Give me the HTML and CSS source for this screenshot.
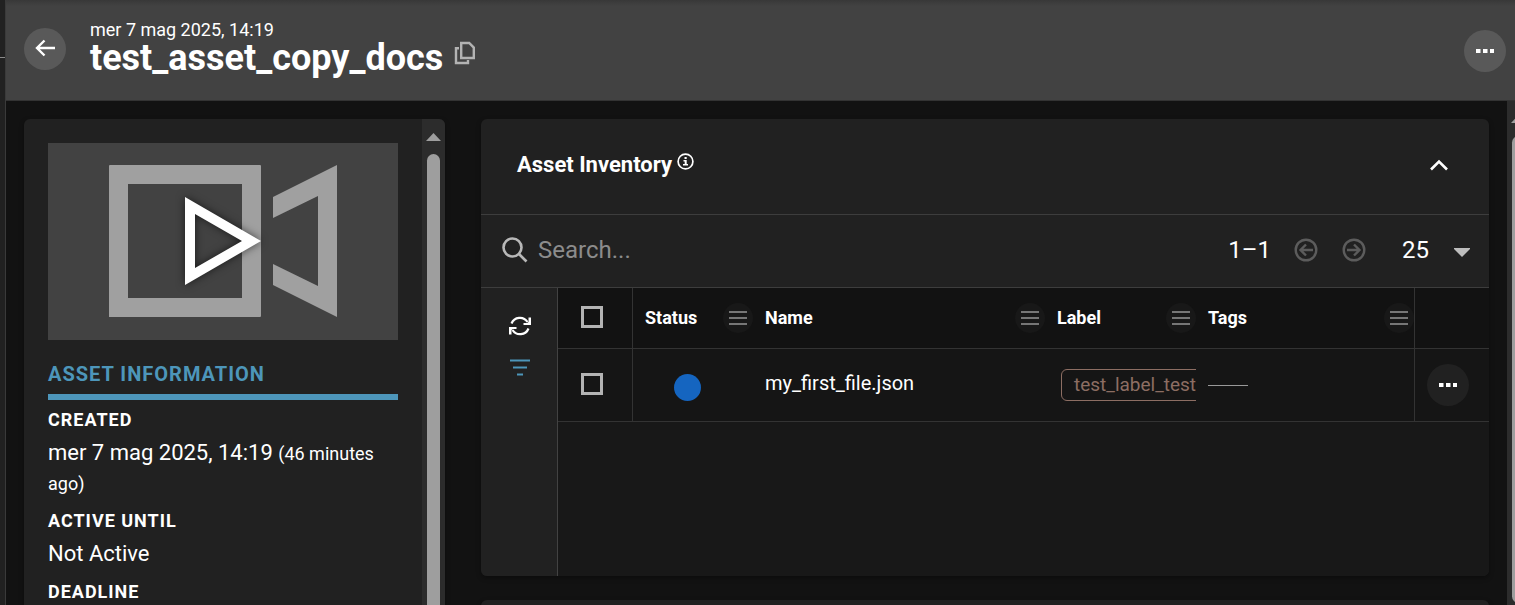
FILE: index.html
```html
<!DOCTYPE html>
<html lang="it">
<head>
<meta charset="utf-8">
<title>test_asset_copy_docs</title>
<link rel="stylesheet" href="styles.css">
</head>
<body>
<div class="app">
  <div class="rail"><div class="rail-mark"></div></div>
  <div class="page">
    <header class="topbar">
      <button class="round-btn" type="button" aria-label="Back">
        <svg width="42" height="42" viewBox="0 0 42 42"><path d="M31 20H12.500M20.500 12.500 13 20l7.500 7.500" fill="none" stroke="#fff" stroke-width="2.400"/></svg>
      </button>
      <div class="heading">
        <div class="heading-date">mer 7 mag 2025, 14:19</div>
        <h1 class="heading-title">test_asset_copy_docs</h1>
      </div>
      <button class="icon-btn copy-btn" type="button" aria-label="Copy">
        <svg width="22" height="24" viewBox="0 0 22 24"><g fill="none" stroke="#b3b3b3" stroke-width="2.400"><path d="M7.200 2h8l4.600 4.600V17H7.200z"/><path d="M5 7.200H2V22h12v-3"/></g></svg>
      </button>
      <button class="round-btn more-btn" type="button" aria-label="More actions">
        <svg width="42" height="42" viewBox="0 0 42 42" fill="#fff"><path d="M12 19h4.500v4H12zM19 19h4.500v4H19zM26 19h4v4h-4z"/></svg>
      </button>
    </header>

    <div class="content">
      <aside class="card info">
        <div class="info-body">
          <div class="preview">
            <svg class="preview-art" viewBox="0 0 350 197" role="img" aria-label="Video">
              <g fill="#a0a0a0">
                <path fill-rule="evenodd" d="M62 22h150q1 0 1 1v150q0 1-1 1H61V23q0-1 1-1zM80 41v114h114V41z"/>
                <path d="M225 54 289 22v152l-64-32v-21l45 22V53l-45 22z"/>
              </g>
              <path class="play" fill="#fff" fill-rule="evenodd" d="M137 54l76 44-76 44zM147 71v54l47-27z"/>
            </svg>
          </div>
          <h2 class="info-title">ASSET INFORMATION</h2>
          <dl class="facts">
            <dt>CREATED</dt>
            <dd>mer 7 mag 2025, 14:19 <small>(46 minutes ago)</small></dd>
            <dt>ACTIVE UNTIL</dt>
            <dd>Not Active</dd>
            <dt>DEADLINE</dt>
          </dl>
        </div>
        <div class="scroll">
          <svg class="scroll-up" width="15" height="8" viewBox="0 0 15 8"><path d="M0 8 7.500 0 15 8z" fill="#9e9e9e"/></svg>
          <div class="scroll-thumb"></div>
        </div>
      </aside>

      <main class="main">
        <section class="card inventory">
          <div class="inventory-head">
            <h2 class="inventory-title">Asset Inventory</h2>
            <svg class="info-icon" width="17" height="17" viewBox="0 0 17 17"><circle cx="8.500" cy="8.500" r="7.400" fill="none" stroke="#fff" stroke-width="1.700"/><path d="M7.500 4h2.200v2H7.500zM6.500 7h3.200v4h1.300v1.500H6V11h1.700V8.500H6.500z" fill="#fff"/></svg>
            <button class="icon-btn collapse" type="button" aria-label="Collapse">
              <svg width="20" height="12" viewBox="0 0 20 12"><path d="M2 10.500 10 2.500l8 8" fill="none" stroke="#fff" stroke-width="2.600"/></svg>
            </button>
          </div>

          <div class="toolbar">
            <label class="search">
              <svg width="26" height="26" viewBox="0 0 26 26"><g fill="none" stroke="#b8b8b8" stroke-width="2.600"><circle cx="10.500" cy="10.500" r="9"/><path d="M17 17l7.500 7.500"/></g></svg>
              <input class="search-input" type="text" placeholder="Search..." aria-label="Search">
            </label>
            <span class="range">1–1</span>
            <button class="icon-btn" type="button" aria-label="Previous page" disabled>
              <svg width="24" height="24" viewBox="0 0 24 24"><g fill="none" stroke="#5c5c5c" stroke-width="2.400"><circle cx="12" cy="12" r="10.300"/><path d="M19 12H6.500M12 6.500 6.500 12l5.500 5.500"/></g></svg>
            </button>
            <button class="icon-btn" type="button" aria-label="Next page" disabled>
              <svg width="24" height="24" viewBox="0 0 24 24"><g fill="none" stroke="#5c5c5c" stroke-width="2.400"><circle cx="12" cy="12" r="10.300"/><path d="M5 12h12.500M12 6.500l5.500 5.500-5.500 5.500"/></g></svg>
            </button>
            <label class="size">
              <select class="size-select" aria-label="Rows per page"><option>25</option></select>
              <svg class="caret" width="16" height="9" viewBox="0 0 16 9"><path d="M0 0h16v1L8 9 0 1z" fill="#bdbdbd"/></svg>
            </label>
          </div>

          <div class="grid">
            <div class="tools">
              <button class="icon-btn" type="button" aria-label="Refresh">
                <svg width="22" height="20" viewBox="0 0 22 20"><g fill="none" stroke="#fff" stroke-width="2.200"><path d="M2.500 7.500A9 9 0 0 1 18.500 6M19.500 12.500A9 9 0 0 1 3.500 14"/></g><path d="M22 1.500V9h-7.500V7h3.500l1.500-1V1.500zM0 18.500V11h7.500v2H4l-1.500 1v4.500z" fill="#fff"/></svg>
              </button>
              <button class="icon-btn" type="button" aria-label="Filter">
                <svg width="20" height="17" viewBox="0 0 20 17"><path d="M0 1.500h20M3 8.500h14M7 15.500h6" stroke="#4d96ba" stroke-width="2.200"/></svg>
              </button>
            </div>
            <table class="table">
              <colgroup><col class="c-check"><col class="c-status"><col class="c-name"><col class="c-label"><col class="c-tags"><col class="c-actions"></colgroup>
              <thead>
                <tr>
                  <th class="check"><input class="box" type="checkbox" aria-label="Select all"></th>
                  <th><div class="th">Status<button class="menu" type="button" aria-label="Status menu"><svg width="18" height="14" viewBox="0 0 18 14"><path d="M0 1h18M0 7h18M0 13h18"/></svg></button></div></th>
                  <th><div class="th">Name<button class="menu" type="button" aria-label="Name menu"><svg width="18" height="14" viewBox="0 0 18 14"><path d="M0 1h18M0 7h18M0 13h18"/></svg></button></div></th>
                  <th><div class="th">Label<button class="menu" type="button" aria-label="Label menu"><svg width="18" height="14" viewBox="0 0 18 14"><path d="M0 1h18M0 7h18M0 13h18"/></svg></button></div></th>
                  <th><div class="th">Tags<button class="menu" type="button" aria-label="Tags menu"><svg width="18" height="14" viewBox="0 0 18 14"><path d="M0 1h18M0 7h18M0 13h18"/></svg></button></div></th>
                  <th class="actions"></th>
                </tr>
              </thead>
              <tbody>
                <tr>
                  <td class="check"><input class="box" type="checkbox" aria-label="Select my_first_file.json"></td>
                  <td class="status"><div class="dot"></div></td>
                  <td class="name">my_first_file.json</td>
                  <td class="label"><div class="clip"><span class="chip">test_label_test</span></div></td>
                  <td class="tags"><div class="dash"></div></td>
                  <td class="actions">
                    <button class="round-btn row-more" type="button" aria-label="Row actions">
                      <svg width="42" height="42" viewBox="0 0 42 42" fill="#fff"><path d="M12 19h4.500v4H12zM19 19h4.500v4H19zM26 19h4v4h-4z"/></svg>
                    </button>
                  </td>
                </tr>
              </tbody>
            </table>
          </div>
        </section>
        <section class="card next"></section>
      </main>

      <div class="scroll page-scroll">
        <svg class="scroll-up" width="15" height="8" viewBox="0 0 15 8"><path d="M0 8 7.500 0 15 8z" fill="#9e9e9e"/></svg>
        <div class="scroll-thumb"></div>
      </div>
    </div>
  </div>
</div>
</body>
</html>
```
FILE: styles.css
```css
* { box-sizing: border-box; }

body {
  margin: 0;
  background: #121212;
  color: #fff;
  font: 20px/28px Roboto, sans-serif;
}

h1, h2, dl, dd { margin: 0; }
svg { display: block; flex: none; }

button {
  flex: none;
  padding: 0;
  border: 0;
  background: none;
}

.app {
  display: flex;
  height: 100vh;
  overflow: hidden;
}

.rail {
  flex: none;
  width: 6px;
  padding-top: 57px;
  background: #212121;
  border-right: 1px solid #3a3a3a;
}
.rail-mark { height: 1px; background: #8a8a8a; }

.page {
  flex: 1;
  min-width: 0;
  display: flex;
  flex-direction: column;
}

.topbar {
  flex: none;
  display: flex;
  align-items: flex-start;
  padding: 18px 9px 24px 18px;
  background: linear-gradient(#383838, #424242 6px);
  border-bottom: 1px solid #333;
}

.round-btn {
  width: 42px;
  height: 42px;
  margin-top: 10px;
  border-radius: 50%;
  background: #595959;
}
.more-btn { margin: 12px 0 0 auto; }

.heading { margin-left: 24px; }
.heading-date { font-size: 18px; line-height: 23px; }
.heading-title { font-size: 36px; line-height: 35px; font-weight: 700; }
.copy-btn { margin: 23px 0 0 11px; }

.content {
  flex: 1;
  min-height: 0;
  display: flex;
  padding-left: 18px;
}

.card {
  background: #212121;
  border-radius: 6px;
  box-shadow: 0 2px 5px rgba(0, 0, 0, .35);
}

.info {
  flex: none;
  display: flex;
  width: 421px;
  margin: 18px 36px 0 0;
  border-radius: 6px 6px 0 0;
  overflow: hidden;
}
.info-body { flex: 1; padding: 24px 24px 0; }
.preview { background: #424242; }
.preview-art { width: 100%; }
.play { filter: drop-shadow(0 0 4px rgba(0, 0, 0, .6)); }

.info-title {
  margin-top: 20px;
  padding-bottom: 6px;
  border-bottom: 6px solid #4d96ba;
  color: #4d96ba;
  font-size: 20px;
  line-height: 28px;
  font-weight: 700;
  letter-spacing: 1px;
}

.facts dt {
  padding-top: 5px;
  font-size: 18px;
  line-height: 30px;
  font-weight: 700;
  letter-spacing: 1px;
}
.facts dd { padding: 3px 0; font-size: 22px; line-height: 30px; }
.facts small { font-size: 18px; line-height: 20px; }

.scroll {
  flex: none;
  width: 23px;
  padding: 14px 5px 0;
  display: flex;
  flex-direction: column;
  align-items: center;
  background: #2c2c2c;
}
.scroll-thumb {
  flex: 1;
  width: 13px;
  margin-top: 13px;
  border-radius: 7px 7px 0 0;
  background: #9e9e9e;
}
.page-scroll { margin-right: -15px; }
.page-scroll .scroll-thumb { margin-bottom: 2px; border-radius: 7px; }

.main {
  flex: 1;
  min-width: 0;
  display: flex;
  flex-direction: column;
  gap: 24px;
  padding: 18px 18px 0 0;
}

.inventory { flex: none; overflow: hidden; }
.inventory-head {
  display: flex;
  align-items: center;
  height: 96px;
  padding: 0 40px 3px 36px;
  border-bottom: 1px solid #3d3d3d;
}
.inventory-title { font-size: 22px; font-weight: 700; }
.info-icon { margin: 0 0 8px 5px; }
.collapse { margin-left: auto; }

.toolbar {
  display: flex;
  align-items: center;
  gap: 24px;
  height: 73px;
  padding: 0 19px 2px 21px;
  border-bottom: 1px solid #3d3d3d;
  font-size: 24px;
}
.search { flex: 1; display: flex; align-items: center; gap: 10px; }
.search-input {
  flex: 1;
  min-width: 0;
  padding: 0;
  border: 0;
  outline: 0;
  background: none;
  color: #fff;
  font: inherit;
}
.search-input::placeholder { color: #8c8c8c; }
.range { margin-right: -1px; }
.size { display: flex; align-items: center; gap: 25px; margin-left: 12px; }
.size-select {
  appearance: none;
  padding: 0;
  border: 0;
  background: none;
  color: #fff;
  font: inherit;
}
.caret { margin-top: 4px; }

.grid { display: flex; align-items: flex-start; background: #181818; }
.tools {
  flex: none;
  align-self: stretch;
  width: 77px;
  min-height: 288px;
  display: flex;
  flex-direction: column;
  align-items: center;
  gap: 23px;
  padding: 28px 0 0 2px;
  background: #212121;
  border-right: 1px solid #424242;
}

.table {
  flex: 1;
  width: 100%;
  table-layout: fixed;
  border-collapse: separate;
  border-spacing: 0;
  background: #121212;
}
.c-check { width: 75px; }
.c-status { width: 120px; }
.c-name { width: 292px; }
.c-label { width: 151px; }
.c-actions { width: 75px; }
.table th, .table td {
  padding: 0 0 0 12px;
  border-bottom: 1px solid #333;
  text-align: left;
  vertical-align: middle;
}
.table th { height: 61px; font-size: 18px; font-weight: 700; }
.table td { height: 73px; background: #151515; }
.table .check { padding: 0 6px 2px 0; border-right: 1px solid #333; }
.table .name { padding-bottom: 4px; }
.table .actions { padding: 0 0 0 12px; border-left: 1px solid #333; }

.th { display: flex; align-items: center; justify-content: space-between; }
.menu {
  width: 30px;
  height: 30px;
  display: grid;
  place-items: center;
  border-radius: 50%;
  background: #181818;
}
.menu path { stroke: #767676; stroke-width: 2; }

.box {
  appearance: none;
  display: block;
  width: 22px;
  height: 22px;
  margin: 0 auto;
  border: 3px solid #b3b3b3;
}

.dot {
  width: 27px;
  height: 27px;
  margin: 4px 0 0 29px;
  border-radius: 50%;
  background: #1565c0;
}

.table .label { padding: 0; }
.clip { display: flex; padding-left: 16px; overflow: hidden; }
.chip {
  flex: none;
  padding: 0 12px;
  border: 1px solid #8d6e63;
  border-radius: 6px;
  color: #8d6e63;
  font-size: 19px;
  line-height: 30px;
}
.dash { width: 40px; height: 1px; background: #999; }
.row-more { display: block; margin: 0; background: #212121; }

.next { flex: none; min-height: 96px; }
```
